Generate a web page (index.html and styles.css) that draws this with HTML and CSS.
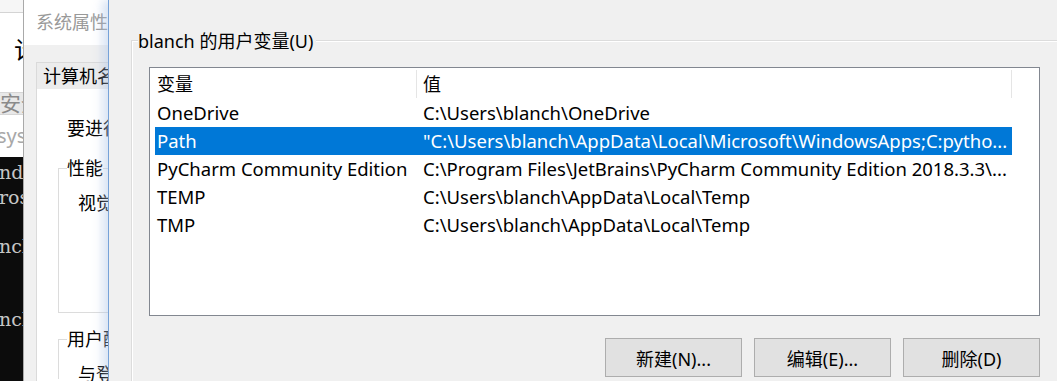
FILE: index.html
```html
<!DOCTYPE html>
<html lang="zh-CN">
<head>
    <meta charset="UTF-8">
    <meta name="viewport" content="width=device-width, initial-scale=1.0">
    <title>环境变量</title>
    <link rel="stylesheet" href="styles.css">
</head>
<body>
    <!-- window far behind: settings page and a console -->
    <div class="back-win">
        <div class="back-top"></div>
        <div class="back-head">计算机</div>
        <div class="back-band">安全</div>
        <div class="back-path">sys</div>
        <div class="terminal">
            <div class="term-line">nde</div>
            <div class="term-line">ros</div>
            <div class="term-line"></div>
            <div class="term-line">ncl</div>
            <div class="term-line"></div>
            <div class="term-line"></div>
            <div class="term-line">ncl</div>
        </div>
    </div>

    <!-- 系统属性 dialog, mostly covered -->
    <div class="sys-win">
        <div class="sys-title">系统属性</div>
        <div class="sys-body">
            <div class="sys-tab">计算机名</div>
            <div class="sys-panel">
                <p class="sys-note">要进行大部分更改</p>
                <div class="sys-group">
                    <div class="sys-group-title">性能</div>
                    <div class="sys-group-text">视觉效果</div>
                </div>
                <div class="sys-group sys-group-open">
                    <div class="sys-group-title">用户配置文件</div>
                    <div class="sys-group-text">与登录帐户</div>
                </div>
            </div>
        </div>
    </div>

    <!-- 环境变量 dialog -->
    <div class="env-win">
        <div class="group">
            <div class="group-title">blanch 的用户变量(U)</div>
            <div class="list">
                <div class="list-head">
                    <div class="hcell hcell-name">变量</div>
                    <div class="hcell hcell-value">值</div>
                </div>
                <div class="row">
                    <div class="cell-name">OneDrive</div>
                    <div class="cell-value">C:\Users\blanch\OneDrive</div>
                </div>
                <div class="row selected">
                    <div class="cell-name">Path</div>
                    <div class="cell-value">"C:\Users\blanch\AppData\Local\Microsoft\WindowsApps;C:pytho...</div>
                </div>
                <div class="row">
                    <div class="cell-name">PyCharm Community Edition</div>
                    <div class="cell-value">C:\Program Files\JetBrains\PyCharm Community Edition 2018.3.3\...</div>
                </div>
                <div class="row">
                    <div class="cell-name">TEMP</div>
                    <div class="cell-value">C:\Users\blanch\AppData\Local\Temp</div>
                </div>
                <div class="row">
                    <div class="cell-name">TMP</div>
                    <div class="cell-value">C:\Users\blanch\AppData\Local\Temp</div>
                </div>
            </div>
            <div class="actions">
                <button>新建(N)...</button>
                <button>编辑(E)...</button>
                <button>删除(D)</button>
            </div>
        </div>
    </div>
</body>
</html>
```

FILE: styles.css
```css
body {
    margin: 0;
    height: 381px;
    overflow: hidden;
    display: flex;
    background-color: #f0f0f0;
    font-family: "Noto Sans", "Noto Sans CJK SC", sans-serif;
    font-size: 18px;
    color: #000;
}

/* back window */
.back-win {
    width: 23px;
    flex-shrink: 0;
    display: flex;
    flex-direction: column;
    overflow: hidden;
    white-space: nowrap;
    background-color: #fff;
}
.back-top {
    height: 12px;
    background-color: #f6f6f6;
    border-bottom: 1px solid #d4d4d4;
}
.back-head {
    height: 79px;
    box-sizing: border-box;
    padding: 19px 0 0 14px;
    font-size: 24px;
    line-height: 36px;
}
.back-band {
    height: 23px;
    box-sizing: border-box;
    background-color: #e8e8e8;
    border-top: 1px solid #d6d6d6;
    border-bottom: 1px solid #d6d6d6;
    color: #8a8a8a;
    font-size: 21px;
    line-height: 21px;
}
.back-path {
    height: 42px;
    line-height: 42px;
    margin-left: -3px;
    color: #a8a8a8;
    font-size: 20px;
}
.terminal {
    flex: 1;
    padding-top: 3px;
    background-color: #0c0c0c;
    color: #c6c6c6;
    font-family: "DejaVu Serif", serif;
    font-size: 19px;
}
.term-line {
    height: 24.5px;
    line-height: 24.5px;
    margin-left: -1px;
}

/* 系统属性 */
.sys-win {
    width: 84px;
    flex-shrink: 0;
    border-left: 1px solid #a9a9a9;
    display: flex;
    flex-direction: column;
    overflow: hidden;
    white-space: nowrap;
}
.sys-title {
    height: 45px;
    line-height: 45px;
    padding-left: 12px;
    background-color: #fff;
    color: #999;
}
.sys-body {
    flex: 1;
    display: flex;
    flex-direction: column;
    padding: 17px 0 0 12px;
}
.sys-tab {
    height: 27px;
    line-height: 27px;
    box-sizing: border-box;
    padding-left: 6px;
    background-color: #ececec;
    border-top: 1px solid #dadada;
    border-left: 1px solid #dadada;
}
.sys-panel {
    flex: 1;
    background-color: #fff;
    border-left: 1px solid #dadada;
}
.sys-note {
    margin: 27px 0 0 30px;
    line-height: 24px;
}
.sys-group {
    margin: 28px 0 0 21px;
    height: 145px;
    box-sizing: border-box;
    border: 1px solid #dcdcdc;
    border-right: none;
}
.sys-group-open {
    margin-top: 26px;
    height: 40px;
    border-bottom: none;
}
.sys-group-title {
    width: fit-content;
    margin: -13px 0 0 8px;
    line-height: 24px;
    background-color: #fff;
}
.sys-group-text {
    margin: 11px 0 0 19px;
    line-height: 24px;
}

/* 环境变量 */
.env-win {
    flex: 1;
    display: flex;
    flex-direction: column;
    border-left: 1px solid #76a2d8;
    box-shadow: -6px 0 9px rgba(170, 195, 230, 0.45);
}
.group {
    flex: 1;
    margin: 40px 0 0 22px;
    padding-left: 17px;
    border-top: 1px solid #dcdcdc;
    border-left: 1px solid #dcdcdc;
    box-shadow: inset 1px 1px 0 #fff;
}
.group-title {
    width: fit-content;
    margin: -13px 0 0 -11px;
    padding-right: 3px;
    line-height: 26px;
    background-color: #f0f0f0;
}
.list {
    width: 891px;
    height: 249px;
    box-sizing: border-box;
    margin-top: 13px;
    border: 1px solid #828790;
    background-color: #fff;
    overflow: hidden;
    white-space: nowrap;
    font-size: 18.5px;
}
.list-head {
    display: flex;
    height: 31px;
}
.hcell {
    box-sizing: border-box;
    border-right: 1px solid #e5e5e5;
    margin: 2px 0 1px;
    line-height: 28px;
    font-size: 18px;
}
.hcell-name {
    width: 267px;
    padding-left: 7px;
}
.hcell-value {
    width: 595px;
    padding-left: 6px;
}
.row {
    display: flex;
    width: 857px;
    height: 28px;
    line-height: 28px;
    margin-left: 5px;
}
.row.selected {
    background-color: #0078d7;
    color: #fff;
}
.cell-name {
    width: 266px;
    flex-shrink: 0;
    padding-left: 2px;
    box-sizing: border-box;
}
.cell-value {
    flex: 1;
    padding-left: 2px;
    overflow: hidden;
}
.actions {
    width: 891px;
    margin-top: 22px;
    display: flex;
    justify-content: flex-end;
    gap: 12px;
}
button {
    width: 137px;
    height: 39px;
    padding: 0;
    background-color: #e1e1e1;
    border: 1px solid #adadad;
    border-radius: 0;
    font-family: inherit;
    font-size: 18px;
    color: #000;
}
```
